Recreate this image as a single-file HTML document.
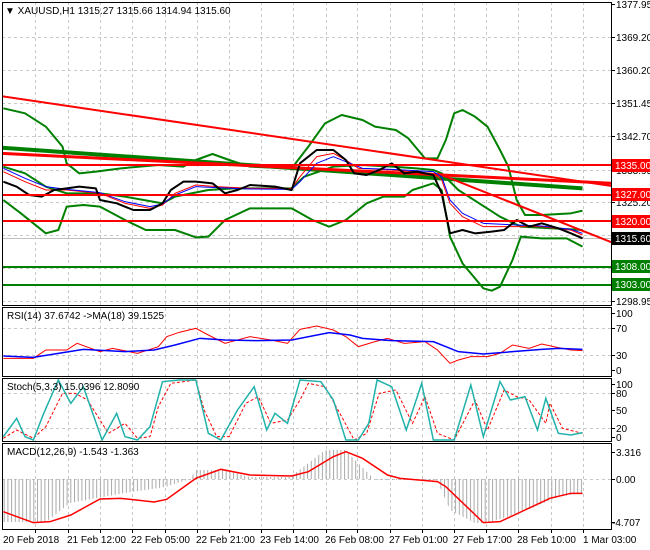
<!DOCTYPE html>
<html><head><meta charset="utf-8"><style>
html,body{margin:0;padding:0;background:#fff;}
svg{display:block;font-family:"Liberation Sans",sans-serif;font-size:10px;}
</style></head><body>
<svg width="650" height="550" viewBox="0 0 650 550" xmlns="http://www.w3.org/2000/svg">
<defs>
<clipPath id="cm"><rect x="2" y="2" width="609" height="303"/></clipPath>
<clipPath id="cr"><rect x="2" y="307" width="609" height="69"/></clipPath>
<clipPath id="cs"><rect x="2" y="378" width="609" height="63"/></clipPath>
<clipPath id="cd"><rect x="2" y="443" width="609" height="86"/></clipPath>
<pattern id="hist" x="0" y="0" width="3.7" height="10" patternUnits="userSpaceOnUse"><rect x="0" y="0" width="1" height="10" fill="#a8a8a8"/></pattern>
</defs>
<rect width="650" height="550" fill="#fff"/>
<g stroke="#c8c8c8" stroke-dasharray="3,3" stroke-width="1">
<path d="M35.5 2V529M68.5 2V529M100.5 2V529M132.5 2V529M165.5 2V529M197.5 2V529M229.5 2V529M261.5 2V529M293.5 2V529M326.5 2V529M357.5 2V529M390.5 2V529M422.5 2V529M454.5 2V529M486.5 2V529M518.5 2V529M551.5 2V529M583.5 2V529"/>
<path d="M2 37.5H611M2 70.5H611M2 103.5H611M2 136.5H611M2 170.5H611M2 202.5H611M2 235.5H611M2 268.5H611M2 301.5H611"/>
<path d="M2 328.5H611M2 355.5H611M2 393.5H611M2 428.5H611M2 479.5H611"/>
</g>
<g clip-path="url(#cm)">
<line x1="2" y1="238.5" x2="611" y2="238.5" stroke="#c0c0c0"/>
<g transform="scale(0.41667,0.33333)" fill="none" stroke-linejoin="round">
<polyline vector-effect="non-scaling-stroke" stroke="#008000" stroke-width="2" points="8,325 60,340 110,380 150,440 160,490 190,520 230,515 290,505 380,495 440,500 470,480 510,462 550,480 600,500 700,505 740,440 780,370 820,345 870,360 900,380 950,390 980,415 1020,475 1050,475 1070,420 1090,340 1110,330 1140,350 1170,380 1200,450 1220,500 1240,600 1260,645 1300,645 1370,640 1398,632"/>
<polyline vector-effect="non-scaling-stroke" stroke="#008000" stroke-width="2" points="8,500 60,520 110,560 160,580 240,580 300,590 390,610 420,590 500,570 560,565 700,565 730,530 800,500 870,495 940,500 1000,505 1040,510 1060,520 1100,570 1150,610 1200,650 1250,680 1398,690"/>
<polyline vector-effect="non-scaling-stroke" stroke="#008000" stroke-width="2" points="8,600 50,640 110,700 140,690 160,620 200,615 240,620 300,660 350,690 420,690 470,712 500,710 540,660 600,625 700,625 750,660 790,680 830,660 880,610 920,590 970,590 990,570 1040,550 1060,570 1080,710 1110,790 1160,865 1180,872 1200,860 1230,780 1250,710 1300,715 1360,715 1398,740"/>
<line vector-effect="non-scaling-stroke" x1="0" y1="443" x2="1398" y2="565" stroke="#008000" stroke-width="4"/>
<line vector-effect="non-scaling-stroke" x1="0" y1="288" x2="1468" y2="558" stroke="#ff0000" stroke-width="2"/>
<line vector-effect="non-scaling-stroke" x1="0" y1="460" x2="1468" y2="550" stroke="#ff0000" stroke-width="3"/>
<line vector-effect="non-scaling-stroke" x1="1050" y1="520" x2="1468" y2="727" stroke="#ff0000" stroke-width="2"/>
<polyline vector-effect="non-scaling-stroke" stroke="#ff0000" stroke-width="1" points="8,515 60,545 110,570 160,570 240,580 300,610 360,625 390,615 420,580 470,555 520,560 600,565 700,565 720,530 760,470 800,460 830,480 860,505 940,510 1040,520 1060,540 1080,610 1110,650 1160,680 1240,680 1300,680 1370,690 1398,705"/>
<polyline vector-effect="non-scaling-stroke" stroke="#0000ff" stroke-width="1" points="8,505 60,535 110,560 160,568 240,578 300,605 360,620 390,612 420,585 470,560 520,563 600,567 700,568 720,545 760,490 800,470 840,490 870,505 940,508 1040,515 1060,530 1080,600 1110,640 1160,670 1240,675 1300,678 1370,688 1398,700"/>
<polyline vector-effect="non-scaling-stroke" stroke="#000" stroke-width="2" points="8,545 40,560 70,585 100,590 130,570 160,565 190,560 230,565 240,600 280,610 320,630 360,630 390,610 410,570 440,545 470,545 510,550 540,580 570,570 600,555 660,560 700,570 720,490 760,450 800,450 830,480 850,520 880,525 910,510 940,490 970,520 1000,515 1040,525 1060,580 1080,700 1110,690 1140,700 1180,695 1210,690 1240,660 1270,680 1300,670 1340,685 1370,700 1398,715"/>
</g>
<line x1="2" y1="165" x2="611" y2="165" stroke="#ff0000" stroke-width="2"/>
<line x1="2" y1="195" x2="611" y2="195" stroke="#ff0000" stroke-width="2"/>
<line x1="2" y1="221" x2="611" y2="221" stroke="#ff0000" stroke-width="2"/>
<line x1="2" y1="267" x2="611" y2="267" stroke="#008000" stroke-width="2"/>
<line x1="2" y1="285" x2="611" y2="285" stroke="#008000" stroke-width="2"/>
</g>
<text x="5" y="14" font-size="10">▼ XAUUSD,H1  1315.27 1315.66 1314.94 1315.60</text>
<g clip-path="url(#cr)"><g transform="translate(0,300) scale(0.41667,0.33333)" fill="none">
<polyline vector-effect="non-scaling-stroke" stroke="#ff0000" points="8,175 80,175 110,150 160,150 185,130 240,155 270,145 330,160 380,140 400,110 430,97 470,85 500,105 540,130 600,110 650,120 690,130 720,88 760,78 800,90 830,110 860,140 900,125 930,115 970,130 1020,125 1050,150 1080,190 1100,180 1130,170 1170,170 1200,160 1230,135 1270,145 1300,132 1340,143 1370,150 1398,152"/>
<polyline vector-effect="non-scaling-stroke" stroke="#0000ff" stroke-width="1.5" points="8,168 80,172 140,160 200,148 300,155 370,150 420,135 480,115 540,120 620,122 700,120 790,98 840,105 870,115 940,122 1040,125 1100,155 1160,162 1230,155 1300,148 1340,145 1398,148"/>
</g></g>
<text x="7" y="319">RSI(14) 37.6742  -&gt;MA(18) 39.1525</text>
<g clip-path="url(#cs)"><g transform="translate(0,300) scale(0.41667,0.33333)" fill="none">
<polyline vector-effect="non-scaling-stroke" stroke="#ff0000" stroke-dasharray="3,2" points="8,415 40,390 80,415 110,380 150,280 180,280 210,300 260,400 300,370 330,415 360,410 380,320 410,250 470,240 490,330 520,410 550,410 590,310 620,290 650,370 690,360 720,300 740,250 780,260 820,350 850,420 880,400 910,280 950,270 990,370 1020,290 1050,400 1090,420 1140,300 1170,390 1210,270 1240,290 1270,300 1310,370 1320,310 1350,385 1398,400"/>
<polyline vector-effect="non-scaling-stroke" stroke="#20b2aa" stroke-width="1.5" points="8,410 40,355 60,410 80,420 105,340 140,240 170,310 200,260 245,420 280,340 300,410 330,420 360,380 390,245 430,240 470,240 500,400 530,420 570,330 610,260 640,390 660,340 690,370 720,240 770,245 800,300 830,420 860,420 885,370 905,240 940,260 975,390 1012,250 1040,420 1090,420 1130,255 1160,410 1200,245 1225,300 1260,290 1290,390 1310,295 1340,400 1370,405 1398,398"/>
</g></g>
<text x="7" y="390">Stoch(5,3,3) 15.0396 12.8090</text>
<g clip-path="url(#cd)">
<polygon fill="url(#hist)" points="3,479 3,522 46,522 70,503 125,493 165,487 190,479 196,470 225,470 250,477 290,477 310,462 325,450 345,450 360,465 375,480 437,480 450,510 475,523 487,523 520,513 558,497 583,493 583,479"/>
<g transform="translate(0,300) scale(0.41667,0.33333)">
<polyline vector-effect="non-scaling-stroke" fill="none" stroke="#ff0000" stroke-width="1.5" points="8,635 80,668 120,665 170,645 240,597 290,595 370,606 400,598 470,535 530,508 600,525 700,528 740,515 800,470 830,455 870,475 930,525 960,535 1050,545 1070,560 1160,668 1200,665 1260,630 1320,595 1370,580 1398,580"/>
</g></g>
<text x="7" y="455">MACD(12,26,9) -1.543 -1.363</text>
<g fill="none" stroke="#000" stroke-width="1">
<rect x="2.5" y="2.5" width="609" height="303"/>
<rect x="2.5" y="307.5" width="609" height="69"/>
<rect x="2.5" y="378.5" width="609" height="63"/>
<rect x="2.5" y="443.5" width="609" height="86"/>
</g>
<g stroke="#000"><path d="M611 4.5h4M611 37.5h4M611 70.5h4M611 103.5h4M611 136.5h4M611 170.5h4M611 202.5h4M611 235.5h4M611 268.5h4M611 301.5h4M611 313.5h4M611 328.5h4M611 355.5h4M611 370.5h4M611 384.5h4M611 393.5h4M611 410.5h4M611 428.5h4M611 437.5h4M611 452.5h4M611 479.5h4M611 522.5h4"/>
<path d="M35.5 529v4M68.5 529v4M100.5 529v4M132.5 529v4M165.5 529v4M197.5 529v4M229.5 529v4M261.5 529v4M293.5 529v4M326.5 529v4M357.5 529v4M390.5 529v4M422.5 529v4M454.5 529v4M486.5 529v4M518.5 529v4M551.5 529v4M583.5 529v4"/></g>
<g font-size="10" fill="#000">
<text x="616" y="8">1377.95</text><text x="616" y="41">1369.20</text><text x="616" y="74">1360.20</text><text x="616" y="107">1351.45</text><text x="616" y="140">1342.70</text><text x="616" y="174">1333.95</text><text x="616" y="206">1325.20</text><text x="616" y="305">1298.95</text>
<text x="616" y="317">100</text><text x="616" y="332">70</text><text x="616" y="359">30</text><text x="616" y="374">0</text>
<text x="616" y="388">100</text><text x="616" y="397">80</text><text x="616" y="414">50</text><text x="616" y="432">20</text><text x="616" y="441">0</text>
<text x="616" y="456">3.316</text><text x="616" y="483">0.00</text><text x="612" y="526">-4.707</text>
</g>
<g font-size="10">
<rect x="612" y="159" width="38" height="13" fill="#ff0000"/><text x="615" y="169" fill="#fff">1335.00</text>
<rect x="612" y="188" width="38" height="13" fill="#ff0000"/><text x="615" y="198" fill="#fff">1327.00</text>
<rect x="612" y="215" width="38" height="13" fill="#ff0000"/><text x="615" y="225" fill="#fff">1320.00</text>
<rect x="612" y="232" width="38" height="13" fill="#000"/><text x="615" y="242" fill="#fff">1315.60</text>
<rect x="612" y="260" width="38" height="13" fill="#008000"/><text x="615" y="270" fill="#fff">1308.00</text>
<rect x="612" y="278" width="38" height="13" fill="#008000"/><text x="615" y="288" fill="#fff">1303.00</text>
</g>
<g font-size="10" fill="#000">
<text x="3" y="543">20 Feb 2018</text><text x="67" y="543">21 Feb 12:00</text><text x="131" y="543">22 Feb 05:00</text><text x="196" y="543">22 Feb 21:00</text><text x="260" y="543">23 Feb 14:00</text><text x="325" y="543">26 Feb 08:00</text><text x="389" y="543">27 Feb 01:00</text><text x="453" y="543">27 Feb 17:00</text><text x="517" y="543">28 Feb 10:00</text><text x="583" y="543">1 Mar 03:00</text>
</g>
</svg>
</body></html>
